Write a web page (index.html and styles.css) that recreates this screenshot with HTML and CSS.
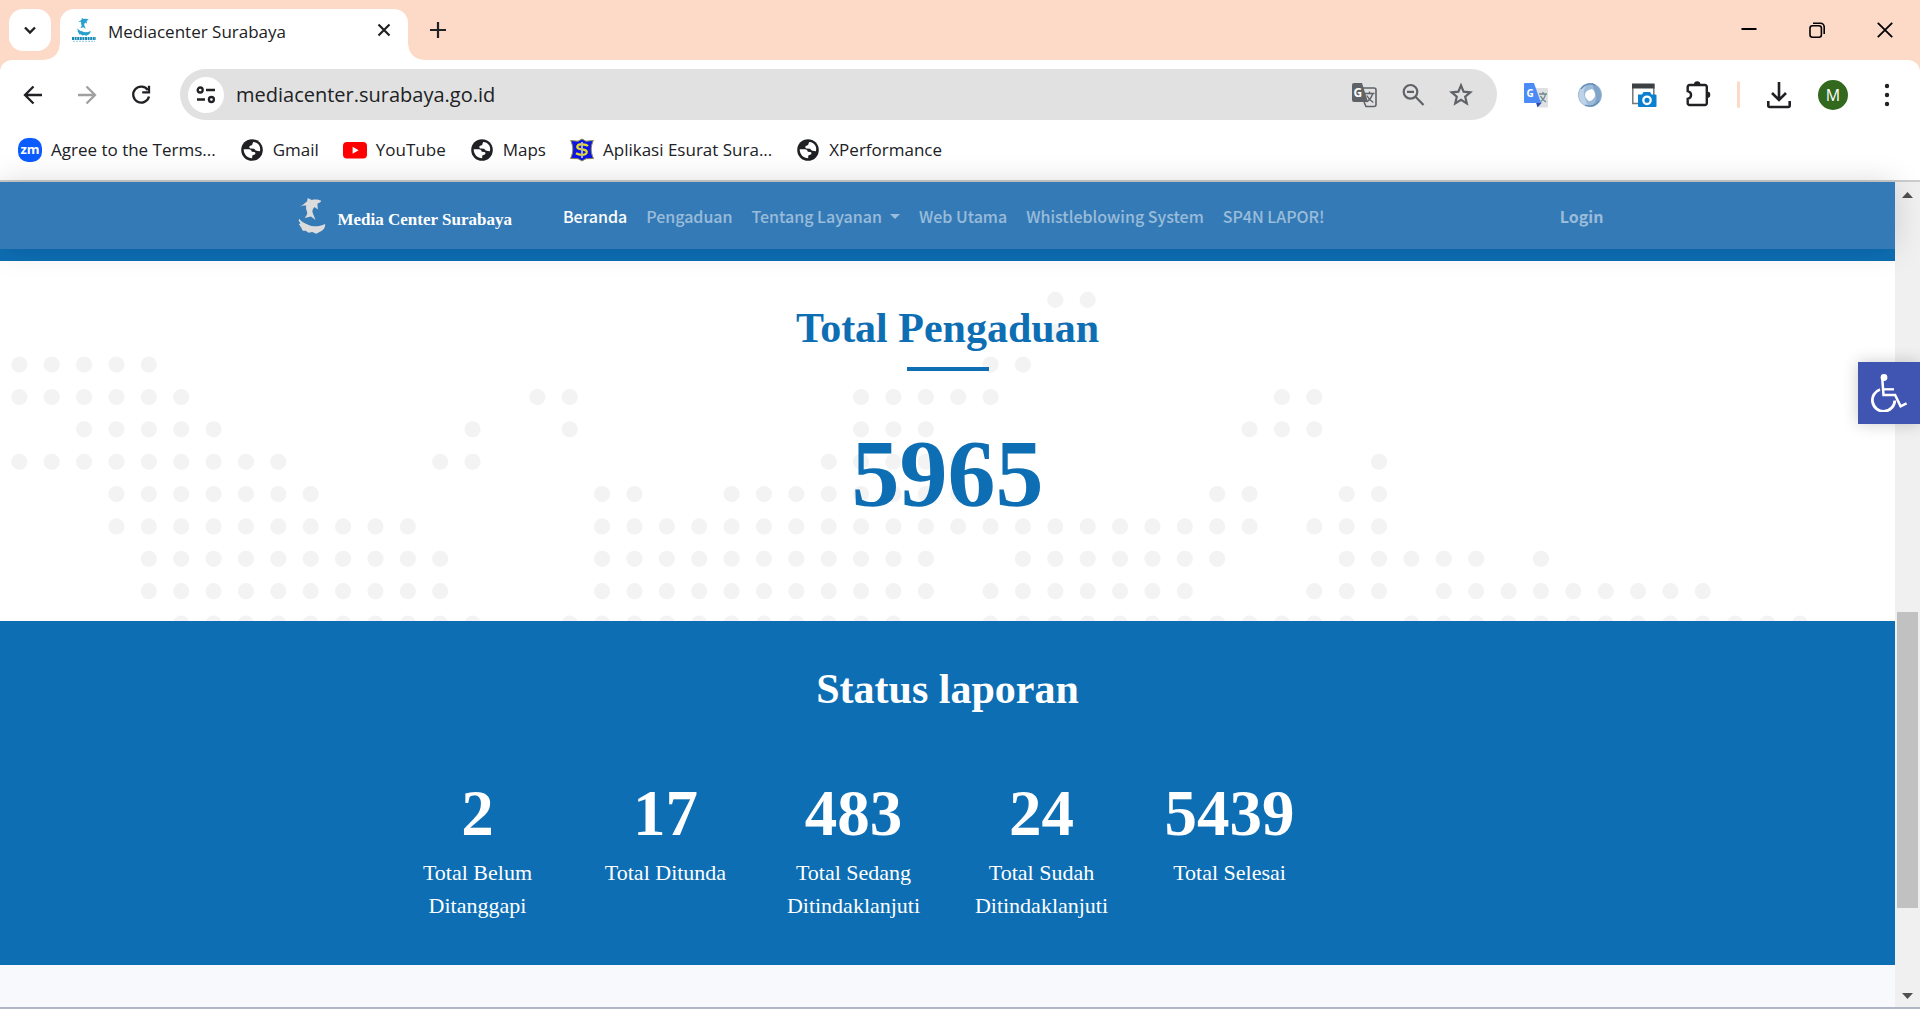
FILE: index.html
```html
<!DOCTYPE html>
<html lang="id">
<head>
  <meta charset="UTF-8" />
  <meta name="viewport" content="width=device-width, initial-scale=1.0"/>
  <title>Mediacenter Surabaya</title>
  <link rel="stylesheet" href="styles.css">
</head>
<body>

  <!-- shared icons -->
  <svg class="defs" width="0" height="0" aria-hidden="true">
    <symbol id="globe" viewBox="0 0 24 24">
      <circle cx="12" cy="12" r="10.8" fill="#202124"/>
      <path d="M13.2 4c2.600 0 5 1.500 6.200 3.800.8 1.700 1 3.500.5 5.400l-2.100-.1c-1.500-.1-2.700-.9-3.600-2.300l-3.400-.2c-1 0-1.500-.6-1.500-1.500 0-1 .7-1.600 1.700-1.700 1-.1 1.400-.6 1.400-1.500z" fill="#fff"/>
      <path d="M3.700 11.200l5.100 0c1.900.1 2.700 1.200 3 2.600l2.500.2c.9.200 1.300.8 1.100 1.600-.2 1-1 1.400-2 1.400-.9.100-1.200.6-1.200 1.500v1.700c-4.800 0-8.600-4-8.500-9z" fill="#fff"/>
    </symbol>
    <symbol id="shark" viewBox="0 0 24 32">
      <path d="M8.200 0l3.600 1.700c3-.6 6-.5 8.400.8-.4 1.200-1.600 2-3.400 2.500l.4 5.300-2.900-2.200c-1.900 1.700-2.400 3.600-1.500 5.600l2.400 5.900-4.100-3.100-5.700 1.200c2.200-2.100 2.800-3.700 2.100-5.600-.8-2.100-1-3.500-.6-5.200C5 6.500 3 6.900.8 7.700 3.800 6.700 5.500 4.600 7.600 3.200z"/>
      <path d="M.8 18.500c1.600 2.500 4.200 4.100 7.800 5.200 4.400 2.300 9.700 1.900 15.100-.6.100 2.700-.9 4.900-3.300 6.200l-4.700 2.400-3.400-1.500-3.400.7-2.600-1.800-2.500.1-1.600-3.200L.3 23.200l1.500-.5L0 20.100z"/>
    </symbol>
  </svg>

  <header class="browser">
    <div class="tab-strip">
      <button class="tab-search" aria-label="Search tabs">
        <svg width="18" height="18" viewBox="0 0 18 18"><path d="M4 6.500l5 5 5-5" fill="none" stroke="#202124" stroke-width="2.400"/></svg>
      </button>
      <div class="tab">
        <svg class="favicon" width="24" height="24" viewBox="0 0 24 24">
          <use href="#shark" x="3" y="0" width="18" height="18" fill="#27a0cd"/>
          <path d="M0 20.500h24" stroke="#168ab5" stroke-width="3" stroke-dasharray="2 .6"/>
          <path d="M1 23.300h22" stroke="#8cc9df" stroke-width="1" stroke-dasharray="2 1"/>
        </svg>
        <span class="tab-title">Mediacenter Surabaya</span>
        <button class="plain" aria-label="Close tab">
          <svg width="14" height="14" viewBox="0 0 14 14"><path d="M1.500 1.500l11 11m0-11l-11 11" stroke="#202124" stroke-width="2.200"/></svg>
        </button>
      </div>
      <button class="plain new-tab" aria-label="New tab">
        <svg width="18" height="18" viewBox="0 0 18 18"><path d="M9 1v16M1 9h16" stroke="#202124" stroke-width="2.200"/></svg>
      </button>
      <div class="window-controls">
        <button class="plain" aria-label="Minimize"><svg width="16" height="16" viewBox="0 0 16 16"><path d="M.5 7h15" stroke="#000" stroke-width="2"/></svg></button>
        <button class="plain" aria-label="Restore"><svg width="16" height="16" viewBox="0 0 16 16" fill="none" stroke="#000" stroke-width="1.600"><rect x="1" y="3.800" width="11.400" height="11.400" rx="2.500"/><path d="M4 1.200h7.500a3.700 3.700 0 0 1 3.700 3.700V12"/></svg></button>
        <button class="plain" aria-label="Close"><svg width="16" height="16" viewBox="0 0 16 16"><path d="M.8.8l14.400 14.400m0-14.400L.8 15.200" stroke="#000" stroke-width="1.800"/></svg></button>
      </div>
    </div>

    <div class="toolbar">
      <button class="tool" aria-label="Back">
        <svg width="20" height="20" viewBox="0 0 20 20" fill="none" stroke="#202124" stroke-width="2.300"><path d="M19 10H3M10.500 1.500L2 10l8.500 8.500"/></svg>
      </button>
      <button class="tool" aria-label="Forward">
        <svg width="20" height="20" viewBox="0 0 20 20" fill="none" stroke="#a0a0a0" stroke-width="2.300"><path d="M1 10h16M9.500 1.500L18 10l-8.500 8.500"/></svg>
      </button>
      <button class="tool" aria-label="Reload">
        <svg width="20" height="20" viewBox="0 0 20 20" fill="none" stroke="#202124" stroke-width="2.300"><path d="M16.800 5A8 8 0 1 0 18 11.500"/><path d="M18 .8v6.500h-6.800"/></svg>
      </button>

      <div class="address">
        <button class="site-info" aria-label="Site information">
          <svg width="20" height="18" viewBox="0 0 20 18" fill="none" stroke="#202124" stroke-width="2.300"><circle cx="4.200" cy="4" r="2.500"/><path d="M10 4h9M1 13.500h8"/><circle cx="15.400" cy="13.500" r="2.500"/></svg>
        </button>
        <input class="url" type="text" aria-label="Address" value="mediacenter.surabaya.go.id">
        <button class="plain" aria-label="Translate this page">
          <svg width="26" height="26" viewBox="0 0 26 26">
            <path d="M3 1h8l6 19H3a2 2 0 0 1-2-2V3a2 2 0 0 1 2-2z" fill="#5f6368"/>
            <path d="M11.500 6H23a2 2 0 0 1 2 2v14.500a2 2 0 0 1-2 2h-8L13 20" fill="none" stroke="#5f6368" stroke-width="1.600"/>
            <text x="2.500" y="15" class="glyph-g">G</text>
            <path d="M14 11.500h9.500M18.500 9.500v2M21.500 12c-1 3.500-3 6-6 8M15.800 13.500c1.500 3 3.500 5 6.500 7" fill="none" stroke="#5f6368" stroke-width="1.400"/>
          </svg>
        </button>
        <button class="plain" aria-label="Zoom">
          <svg width="24" height="24" viewBox="0 0 24 24" fill="none" stroke="#5f6368" stroke-width="2.200"><circle cx="9.500" cy="8.800" r="6.800"/><path d="M14.500 13.800l8 8.200M6 8.800h7"/></svg>
        </button>
        <button class="plain" aria-label="Bookmark this tab">
          <svg width="24" height="24" viewBox="0 0 24 24"><path d="M12 2.400l2.600 6.300 6.800.6-5.200 4.400 1.600 6.700-5.800-3.600-5.800 3.600 1.600-6.700-5.200-4.400 6.800-.6z" fill="none" stroke="#5f6368" stroke-width="2.200"/></svg>
        </button>
      </div>

      <button class="tool" aria-label="Google Translate">
        <svg width="26" height="26" viewBox="0 0 26 26">
          <path d="M12 6h12a1 1 0 0 1 1 1v17.500a1 1 0 0 1-1 1h-8z" fill="#dfe0e2"/>
          <path d="M13 20.500h6l-4.500 5z" fill="#3447a8"/>
          <path d="M2 1h9l7 20H2a1 1 0 0 1-1-1V2a1 1 0 0 1 1-1z" fill="#4b8bf5"/>
          <text x="3.500" y="15" class="glyph-g blue">G</text>
          <path d="M16 12h8M20 10v2M22.500 12c-.6 3.500-2.500 6-5 7.500M17.500 14c1.200 2.500 3 4.500 5.500 6" fill="none" stroke="#6f8a94" stroke-width="1.400"/>
        </svg>
      </button>
      <button class="tool" aria-label="Extension">
        <svg width="26" height="26" viewBox="0 0 26 26" fill="none">
          <circle cx="13" cy="13" r="8.500" stroke="#9dbbd9" stroke-width="7"/>
          <path d="M15 1.300a12 12 0 0 1-1 23.500c5-3.800 6.500-8.800 4-14.800z" fill="#7fa3c9"/>
          <path d="M11 24.700a12 12 0 0 1 1-23.500C7 5 5.500 10 8 16z" fill="#bdd3e8"/>
          <path d="M4 7a11 11 0 0 1 14-4M22 19a11 11 0 0 1-14 4" stroke="#5f88b3" stroke-width="1.200"/>
          <ellipse cx="13.500" cy="13" rx="4" ry="6" fill="#fff" transform="rotate(15 13 13)"/>
        </svg>
      </button>
      <button class="tool" aria-label="Screenshot">
        <svg width="26" height="26" viewBox="0 0 26 26">
          <path d="M1.800 2v19.500h21V2" fill="#fff" stroke="#777" stroke-width="1.500"/>
          <path d="M1 1.500h22.500v5H1z" fill="#3c4043"/>
          <path d="M7 12.500h4l1.500-2.500h6.500l1.500 2.500h4a1 1 0 0 1 1 1V24a1 1 0 0 1-1 1H8a1 1 0 0 1-1-1z" fill="#0c80d0"/>
          <circle cx="16" cy="18.300" r="3.700" fill="none" stroke="#fff" stroke-width="2.300"/>
        </svg>
      </button>
      <button class="tool" aria-label="Extensions">
        <svg width="26" height="28" viewBox="0 0 26 28">
          <path d="M4.500 4h15.500a1.800 1.800 0 0 1 1.800 1.800v16.400A1.800 1.800 0 0 1 20 24H4.500a1.800 1.800 0 0 1-1.800-1.800v-4.400c4.500-1 4.500-6.600 0-7.600V5.800A1.800 1.800 0 0 1 4.500 4z" fill="none" stroke="#202124" stroke-width="2.400"/>
          <path d="M9 3.500a3.200 3.200 0 0 1 6.400 0M22 10.500a3.200 3.200 0 0 1 0 6.600z" fill="#202124"/>
        </svg>
      </button>
      <span class="separator"></span>
      <button class="tool" aria-label="Downloads">
        <svg width="26" height="28" viewBox="0 0 26 28" fill="none" stroke="#202124" stroke-width="2.600"><path d="M13 1v17M6 12l7 7 7-7"/><path d="M2.300 20v4.500a1.500 1.500 0 0 0 1.500 1.500h18.400a1.500 1.500 0 0 0 1.500-1.500V20"/></svg>
      </button>
      <button class="tool" aria-label="Profile"><span class="avatar">M</span></button>
      <button class="tool" aria-label="Menu">
        <svg width="6" height="26" viewBox="0 0 6 26" fill="#202124"><circle cx="3" cy="4" r="2.200"/><circle cx="3" cy="13" r="2.200"/><circle cx="3" cy="22" r="2.200"/></svg>
      </button>
    </div>

    <nav class="bookmarks" aria-label="Bookmarks">
      <a href="#"><span class="zoom-logo">zm</span>Agree to the Terms...</a>
      <a href="#"><svg width="24" height="24"><use href="#globe"/></svg>Gmail</a>
      <a href="#"><svg width="24" height="24" viewBox="0 0 24 24"><rect y="4" width="24" height="16.500" rx="4" fill="#f00"/><path d="M9.600 8.700v7l6-3.500z" fill="#fff"/></svg>YouTube</a>
      <a href="#"><svg width="24" height="24"><use href="#globe"/></svg>Maps</a>
      <a href="#"><svg width="24" height="24" viewBox="0 0 24 24">
        <path d="M12 1l4 2.200 7.300-.7c-2.800 6-2.800 12 .2 18L16 20.700 12 23l-4-2.300-7.500-.2c3-6 3-12 .2-18l7.300.7z" fill="#0d14e6" stroke="#8b8a50" stroke-width="1"/>
        <path d="M18 8c-2-2-9-2.600-10.500 0-1 2.500 2 3 4.500 3.300 3.500.5 5.500 1.400 4.500 3.700-1.200 2.400-7 2.500-10.500.3" fill="none" stroke="#e8dc1c" stroke-width="2.300"/>
        <path d="M12 4v16" stroke="#b9bdc4" stroke-width="1.800"/>
      </svg>Aplikasi Esurat Sura...</a>
      <a href="#"><svg width="24" height="24"><use href="#globe"/></svg>XPerformance</a>
    </nav>
  </header>

  <div class="viewport">
    <div class="page">
      <div class="navbar">
        <div class="nav-inner">
          <a class="brand" href="#"><svg width="28" height="36"><use href="#shark" fill="#dcdcdc"/></svg>Media Center Surabaya</a>
          <nav class="nav-links">
            <a class="active" href="#">Beranda</a>
            <a href="#">Pengaduan</a>
            <a class="dropdown" href="#">Tentang Layanan</a>
            <a href="#">Web Utama</a>
            <a href="#">Whistleblowing System</a>
            <a href="#">SP4N LAPOR!</a>
          </nav>
          <a class="login" href="#">Login</a>
        </div>
      </div>

      <section class="total">
        <!-- dotted world map, one unit per dot; each run is "start row, length" -->
        <svg class="map" viewBox="0 0 58.560 11.120" preserveAspectRatio="xMidYMin slice" aria-hidden="true">
          <g transform="translate(.61 1.200)">
            <path d="M32 0h1.100M32 1h1.100
              M0 2h4.100M30 2h1.100
              M0 3h5.100M16 3h1.100M26 3h4.100M39 3h1.100
              M2 4h4.100M14 4h.1M17 4h.1M26 4h2.100M38 4h2.100
              M0 5h8.100M13 5h1.100M25 5h4.100M42 5h.1
              M3 6h6.100M18 6h1.100M22 6h7.100M37 6h1.100M41 6h1.100
              M3 7h9.100M18 7h20.100M40 7h2.100
              M4 8h9.100M18 8h10.100M31 8h6.100M41 8h4.100M47 8h.1
              M4 9h9.100M18 9h10.100M30 9h6.100M40 9h2.100M44 9h8.100
              M5 10h9.100M17 10h10.100M30 10h11.100M43 10h12.100"/>
          </g>
        </svg>
        <h2>Total Pengaduan</h2>
        <div class="line"></div>
        <p class="total-number">5965</p>
      </section>

      <section class="status">
        <h2>Status laporan</h2>
        <div class="status-grid">
          <div class="status-item"><strong>2</strong><p>Total Belum Ditanggapi</p></div>
          <div class="status-item"><strong>17</strong><p>Total Ditunda</p></div>
          <div class="status-item"><strong>483</strong><p>Total Sedang Ditindaklanjuti</p></div>
          <div class="status-item"><strong>24</strong><p>Total Sudah Ditindaklanjuti</p></div>
          <div class="status-item"><strong>5439</strong><p>Total Selesai</p></div>
        </div>
      </section>
    </div>

    <div class="scrollbar">
      <svg width="11" height="6" viewBox="0 0 11 6"><path d="M0 6L5.500 0 11 6z" fill="#505050"/></svg>
      <div class="track"><div class="thumb"></div></div>
      <svg width="11" height="6" viewBox="0 0 11 6"><path d="M0 0l5.500 6L11 0z" fill="#505050"/></svg>
    </div>

    <button class="accessibility" aria-label="Accessibility tools">
      <svg width="36" height="38" viewBox="0 0 36 38" fill="none" stroke="#fff">
        <circle cx="13" cy="3.500" r="3.400" fill="#fff" stroke="none"/>
        <path d="M11.300 5l1.200 16h11.600l5.500 11.300 6-3" stroke-width="2.500"/>
        <path d="M13 15.300h10" stroke-width="2.300"/>
        <path d="M9 15.500a11.200 11.200 0 1 0 14.800 11" stroke-width="2.800"/>
      </svg>
    </button>
  </div>

</body>
</html>
```
FILE: styles.css
```css
* {
  box-sizing: border-box;
}

body {
  margin: 0;
  height: 100vh;
  display: flex;
  flex-direction: column;
  overflow: hidden;
  background: #fff;
  border-bottom: 2px solid #b1b6c6;
  font-family: "Open Sans", "Noto Sans", sans-serif;
  color: #202124;
}

a {
  color: inherit;
  text-decoration: none;
}

button {
  border: none;
  padding: 0;
  background: none;
  display: flex;
  align-items: center;
  justify-content: center;
  cursor: pointer;
}

h2, p {
  margin: 0;
}

.defs {
  position: absolute;
}

/* browser window */
.browser {
  background: #fcdac7;
  border-bottom: 2px solid #ccc;
}

.tab-strip {
  height: 60px;
  padding: 9px 27px 0 9px;
  display: flex;
  align-items: flex-start;
}

.tab-search {
  width: 42px;
  height: 42px;
  border-radius: 14px;
  background: #fff;
}

.tab {
  position: relative;
  width: 348px;
  height: 51px;
  margin-left: 9px;
  padding: 0 17px 9px 12px;
  display: flex;
  align-items: center;
  gap: 12px;
  border-radius: 14px 14px 0 0;
  background: #fff;
}

.tab::before,
.tab::after {
  content: "";
  position: absolute;
  bottom: 0;
  width: 15px;
  height: 15px;
}

.tab::before {
  left: -15px;
  background: radial-gradient(circle at 0 0, transparent 14px, #fff 15px);
}

.tab::after {
  right: -15px;
  background: radial-gradient(circle at 100% 0, transparent 14px, #fff 15px);
}

.tab-title {
  flex: 1;
  padding-top: 2px;
  font-size: 17px;
}

.new-tab {
  height: 42px;
  margin-left: 21px;
}

.window-controls {
  height: 42px;
  margin-left: auto;
  display: flex;
  gap: 52px;
}

.toolbar {
  height: 69px;
  padding: 0 15px;
  display: flex;
  align-items: center;
  gap: 18px;
  border-radius: 12px 12px 0 0;
  background: #fff;
}

.tool {
  width: 36px;
  height: 36px;
}

.address {
  flex: 1;
  height: 51px;
  margin: 0 3px;
  padding: 0 24px 0 8px;
  display: flex;
  align-items: center;
  gap: 24px;
  border-radius: 26px;
  background: #e1e1e1;
}

.site-info {
  width: 36px;
  height: 36px;
  border-radius: 50%;
  background: #fff;
}

.url {
  flex: 1;
  margin-left: -12px;
  padding: 0;
  border: none;
  outline: none;
  background: none;
  font: 20px "Open Sans", "Noto Sans", sans-serif;
  color: #202124;
}

.glyph-g {
  font: bold 12px "Open Sans", sans-serif;
  fill: #fff;
}

.glyph-g.blue {
  font-size: 10px;
}

.separator {
  width: 3px;
  height: 27px;
  margin: 0 3px;
  border-radius: 2px;
  background: #fcdac7;
}

.avatar {
  width: 30px;
  height: 30px;
  border-radius: 50%;
  background: #33691e;
  color: #fff;
  font: 16px/30px "Open Sans", sans-serif;
}

.bookmarks {
  height: 51px;
  padding: 0 18px 10px;
  display: flex;
  align-items: center;
  gap: 24px;
  background: #fff;
  font-size: 17px;
}

.bookmarks a {
  display: flex;
  align-items: center;
  gap: 9px;
}

.zoom-logo {
  width: 24px;
  height: 24px;
  border-radius: 10px;
  background: #0b5cff;
  color: #fff;
  font: bold 13px/22px "Open Sans", sans-serif;
  text-align: center;
}

/* page area */
.viewport {
  position: relative;
  flex: 1;
  display: flex;
  min-height: 0;
}

.page {
  flex: 1;
  background: #f8f9fc;
}

.navbar {
  position: relative;
  z-index: 1;
  height: 67px;
  background: #347ab6;
  box-shadow: 0 0 30px rgba(0, 0, 0, 0.15);
  font-family: "Noto Sans CJK SC", "Open Sans", sans-serif;
}

.nav-inner {
  max-width: 1320px;
  height: 100%;
  margin: 0 auto;
  padding: 0 4px 0 10px;
  display: flex;
  align-items: center;
}

.brand {
  display: flex;
  align-items: flex-end;
  gap: 12px;
  color: #fff;
  font: bold 17px/28px "Liberation Serif", serif;
}

.nav-links {
  margin-left: 51px;
  display: flex;
  gap: 19px;
  font-size: 16px;
  font-weight: 500;
  color: rgba(255, 255, 255, 0.5);
}

.nav-links .active {
  color: #fff;
}

.dropdown::after {
  content: "";
  display: inline-block;
  margin-left: 8px;
  vertical-align: 4px;
  border: 5px solid transparent;
  border-top-color: currentColor;
  border-bottom: none;
}

.login {
  margin-left: auto;
  font-size: 16px;
  font-weight: bold;
  color: rgba(255, 255, 255, 0.5);
}

.total,
.status {
  font-family: "Liberation Serif", serif;
  text-align: center;
}

.total h2,
.status h2 {
  font-size: 42px;
  line-height: 50px;
}

.total {
  position: relative;
  border-top: 12px solid #0d6eb4;
  padding: 42px 0 89px;
  background: #fff;
  color: #0d6eb4;
}

.map {
  position: absolute;
  top: 0;
  left: 0;
  width: 100%;
  height: 100%;
}

.map path {
  fill: none;
  stroke: #f3f3f3;
  stroke-width: 0.5;
  stroke-linecap: round;
  stroke-dasharray: 0 1;
}

.total h2,
.total-number {
  position: relative;
}

.line {
  position: relative;
  width: 82px;
  height: 4px;
  margin: 14px auto 45px;
  background: #0d6eb4;
}

.total-number {
  font-size: 96px;
  line-height: 116px;
  font-weight: bold;
}

.status {
  padding: 43px 0;
  background: #0d6eb4;
  color: #fff;
}

.status-grid {
  max-width: 1128px;
  margin: 60px auto 0;
  display: grid;
  grid-template-columns: repeat(6, 1fr);
}

.status-item {
  padding: 0 18px;
}

.status-item strong {
  display: block;
  font-size: 65px;
  line-height: 78px;
}

.status-item p {
  margin-top: 4px;
  font-size: 22px;
  line-height: 33px;
}

.scrollbar {
  width: 25px;
  padding: 10px 0 8px;
  display: flex;
  flex-direction: column;
  align-items: center;
  gap: 8px;
  background: #f0f0f0;
}

.track {
  flex: 1;
  width: 21px;
}

.thumb {
  height: 38%;
  margin-top: 406px;
  background: #c1c1c1;
}

.accessibility {
  position: absolute;
  top: 180px;
  right: 0;
  z-index: 2;
  width: 62px;
  height: 62px;
  background: #4054b2;
  box-shadow: 0 0 15px rgba(0, 0, 0, 0.2);
}
```
